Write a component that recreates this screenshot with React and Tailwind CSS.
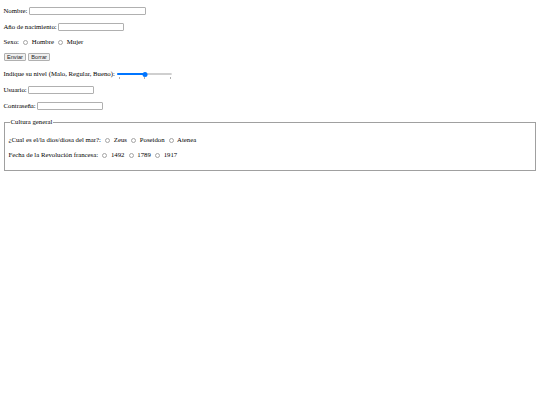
import { useState } from 'react';

function Radio({ checked, onChange }) {
  return (
    <span
      onClick={onChange}
      className={`inline-block w-[5px] h-[5px] shrink-0 rounded-full border-[0.8px] ml-[2.5px] mr-[2px] ${
        checked ? 'border-[#0075ff] bg-[#0075ff]' : 'border-[#a5a5a5] bg-white'
      }`}
    />
  );
}

function TextBox({ w, type = 'text' }) {
  return (
    <input
      type={type}
      className={`${w} h-[8px] border-[0.7px] border-[#b0b0b0] rounded-[1px] bg-white px-[1px] text-[5.6px] outline-none`}
    />
  );
}

function Btn({ children }) {
  return (
    <button className="h-[8px] px-[2.5px] bg-[#efefef] border-[0.7px] border-[#b0b0b0] rounded-[1px] text-[5.6px] leading-[6px] text-[#222] font-['Liberation_Sans',Arial,sans-serif]">
      {children}
    </button>
  );
}

export default function App() {
  const [sexo, setSexo] = useState(null);
  const [mar, setMar] = useState(null);
  const [fecha, setFecha] = useState(null);
  const [nivel] = useState(50);

  const row = 'h-[8px] flex items-center whitespace-pre';

  return (
    <div className="min-h-[405px] bg-white text-black font-['Liberation_Serif','Times_New_Roman',serif] text-[6.75px] leading-[8px] pt-[7px] pl-[3.5px] pr-[4.5px]">
      <div className={row}>
        Nombre: <TextBox w="w-[117px]" />
      </div>
      <div className={`${row} mt-[7.5px]`}>
        Año de nacimiento: <TextBox w="w-[66px]" />
      </div>
      <div className={`${row} mt-[7.5px]`}>
        {'Sexo: '}
        <Radio checked={sexo === 'h'} onChange={() => setSexo('h')} />
        {' Hombre '}
        <Radio checked={sexo === 'm'} onChange={() => setSexo('m')} />
        {' Mujer'}
      </div>
      <div className={`${row} mt-[7px] gap-[1.5px]`}>
        <Btn>Enviar</Btn>
        <Btn>Borrar</Btn>
      </div>

      {/* Slider */}
      <div className={`${row} mt-[9px]`}>
        {'Indique su nivel (Malo, Regular, Bueno): '}
        <div className="relative w-[55px] h-[8px] ml-[1px]">
          <div className="absolute left-0 right-0 top-[3px] h-[2px] rounded-full bg-[#e5e5e5] border-[0.5px] border-[#cfcfcf]" />
          <div className="absolute left-0 top-[3px] h-[2px] rounded-full bg-[#0075ff]" style={{ width: `${nivel}%` }} />
          <div
            className="absolute top-[1.5px] w-[5px] h-[5px] rounded-full bg-[#0075ff] -translate-x-1/2"
            style={{ left: `${nivel}%` }}
          />
          <div className="absolute left-[1.5px] top-[7px] w-[0.6px] h-[1.5px] bg-[#b0b0b0]" />
          <div className="absolute left-[27px] top-[7px] w-[0.6px] h-[1.5px] bg-[#b0b0b0]" />
          <div className="absolute right-[2px] top-[7px] w-[0.6px] h-[1.5px] bg-[#b0b0b0]" />
        </div>
      </div>

      <div className={`${row} mt-[8px]`}>
        Usuario: <TextBox w="w-[66px]" />
      </div>
      <div className={`${row} mt-[8px]`}>
        Contraseña: <TextBox w="w-[66px]" type="password" />
      </div>

      {/* Cultura general */}
      <fieldset className="mt-[8px] border border-[#a0a0a0] pl-[4px] pr-[5px] pb-[11px]">
        <legend className="ml-[1px] px-[1px] h-[8px] leading-[8px]">Cultura general</legend>
        <div className={`${row} mt-[10px]`}>
          {'¿Cual es el/la dios/diosa del mar?: '}
          <Radio checked={mar === 'z'} onChange={() => setMar('z')} />
          {' Zeus '}
          <Radio checked={mar === 'p'} onChange={() => setMar('p')} />
          {' Poseidon '}
          <Radio checked={mar === 'a'} onChange={() => setMar('a')} />
          {' Atenea'}
        </div>
        <div className={`${row} mt-[7px]`}>
          {'Fecha de la Revolución francesa: '}
          <Radio checked={fecha === 1} onChange={() => setFecha(1)} />
          {' 1492 '}
          <Radio checked={fecha === 2} onChange={() => setFecha(2)} />
          {' 1789 '}
          <Radio checked={fecha === 3} onChange={() => setFecha(3)} />
          {' 1917'}
        </div>
      </fieldset>
    </div>
  );
}
